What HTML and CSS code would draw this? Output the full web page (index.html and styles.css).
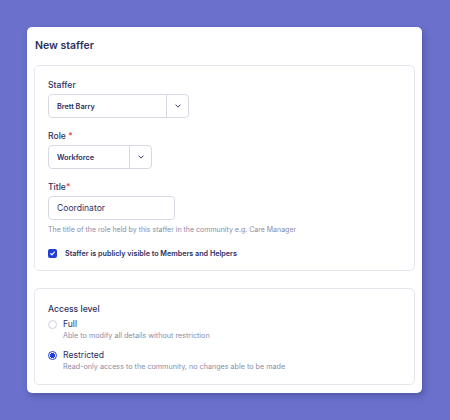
FILE: index.html
```html
<!DOCTYPE html>
<html lang="en">
<head>
<meta charset="utf-8">
<title>New staffer</title>
<link rel="stylesheet" href="styles.css">
</head>
<body>
<div class="card">
  <h1 class="card-title">New staffer</h1>

  <section class="panel">
    <div class="field">
      <label class="field-label">Staffer</label>
      <div class="select select-staffer">
        <span class="select-value">Brett Barry</span>
        <span class="select-toggle">
          <svg width="6" height="4" viewBox="0 0 6 4"><path d="M0.8 0.9 L3 3.1 L5.2 0.9" fill="none" stroke="#3a3c6e" stroke-width="1" stroke-linecap="round" stroke-linejoin="round"/></svg>
        </span>
      </div>
    </div>

    <div class="field">
      <label class="field-label">Role <span class="req">*</span></label>
      <div class="select select-role">
        <span class="select-value">Workforce</span>
        <span class="select-toggle">
          <svg width="6" height="4" viewBox="0 0 6 4"><path d="M0.8 0.9 L3 3.1 L5.2 0.9" fill="none" stroke="#3a3c6e" stroke-width="1" stroke-linecap="round" stroke-linejoin="round"/></svg>
        </span>
      </div>
    </div>

    <div class="field">
      <label class="field-label">Title<span class="req">*</span></label>
      <div class="input">Coordinator</div>
      <p class="hint">The title of the role held by this staffer in the community e.g. Care Manager</p>
    </div>

    <div class="check-row">
      <span class="checkbox">
        <svg width="7" height="7" viewBox="0 0 7 7"><path d="M1.6 3.6 L2.9 4.8 L5.4 2.2" fill="none" stroke="#fff" stroke-width="1.2" stroke-linecap="round" stroke-linejoin="round"/></svg>
      </span>
      <span class="check-label">Staffer is publicly visible to Members and Helpers</span>
    </div>
  </section>

  <section class="panel panel-access">
    <div class="field-label">Access level</div>
    <div class="option">
      <div class="option-row">
        <span class="radio"></span>
        <span class="option-label">Full</span>
      </div>
      <p class="option-desc">Able to modify all details without restriction</p>
    </div>
    <div class="option option-second">
      <div class="option-row">
        <span class="radio radio-on"></span>
        <span class="option-label">Restricted</span>
      </div>
      <p class="option-desc">Read-only access to the community, no changes able to be made</p>
    </div>
  </section>
</div>
</body>
</html>
```

FILE: styles.css
```css
* {
  box-sizing: border-box;
}

html, body {
  margin: 0;
  padding: 0;
}

body {
  background: #6a70cc;
  font-family: "Inter", "Noto Sans", sans-serif;
  color: #2d2f5e;
  width: 450px;
  height: 420px;
  overflow: hidden;
}

.card {
  margin: 27px 0 0 27px;
  width: 395px;
  background: #fff;
  border-radius: 5px;
  padding: 12px 7px 8px 7px;
  box-shadow: 2px 3px 6px rgba(40, 40, 110, 0.35);
}

.card-title {
  margin: 0 0 0 1px;
  font-size: 10.5px;
  line-height: 14px;
  font-weight: 600;
  color: #2d2f5e;
}

.panel {
  margin-top: 12px;
  border: 1px solid #e6e6ee;
  border-radius: 5px;
  padding: 13px 13px 11px;
  display: flex;
  flex-direction: column;
}

.panel-access {
  margin-top: 17px;
  padding: 14px 13px 12px;
}

.field {
  display: flex;
  flex-direction: column;
  margin-bottom: 12px;
}

.field-label {
  font-size: 8.6px;
  line-height: 12px;
  font-weight: 500;
  color: #2d2f5e;
}

.req {
  color: #e0474c;
}

.select {
  margin-top: 3px;
  height: 24px;
  border: 1px solid #d9d9e4;
  border-radius: 4px;
  display: flex;
  align-items: stretch;
}

.select-staffer {
  width: 141px;
}

.select-role {
  width: 104px;
}

.select-value {
  flex: 1;
  display: flex;
  align-items: center;
  padding-left: 8px;
  font-size: 7.3px;
  font-weight: 600;
  color: #2d2f5e;
}

.select-toggle {
  width: 22px;
  border-left: 1px solid #d9d9e4;
  display: flex;
  align-items: center;
  justify-content: center;
}

.input {
  margin-top: 3px;
  width: 127px;
  height: 24px;
  border: 1px solid #d9d9e4;
  border-radius: 4px;
  display: flex;
  align-items: center;
  padding-left: 8px;
  font-size: 8.6px;
  color: #2d2f5e;
}

.hint {
  margin: 5px 0 0;
  font-size: 7px;
  line-height: 10px;
  color: #8a8ba6;
}

.check-row {
  display: flex;
  align-items: center;
  height: 12px;
}

.checkbox {
  width: 9px;
  height: 9px;
  border-radius: 2px;
  background: #1f3fd6;
  display: flex;
  align-items: center;
  justify-content: center;
}

.check-label {
  margin-left: 8px;
  font-size: 7.2px;
  font-weight: 600;
  color: #2d2f5e;
}

.option {
  margin-top: 3px;
}

.option-second {
  margin-top: 8px;
}

.option-row {
  display: flex;
  align-items: center;
  height: 12px;
}

.radio {
  width: 9px;
  height: 9px;
  border-radius: 50%;
  border: 1px solid #cfd0dd;
  background: #fff;
}

.radio-on {
  border-color: #1f3fd6;
  background: radial-gradient(circle, #1f3fd6 0 2.3px, #fff 2.8px);
}

.option-label {
  margin-left: 6px;
  font-size: 8.6px;
  color: #2d2f5e;
}

.option-desc {
  margin: 1px 0 0 15px;
  font-size: 7.2px;
  line-height: 10px;
  color: #8a8ba6;
}
```
